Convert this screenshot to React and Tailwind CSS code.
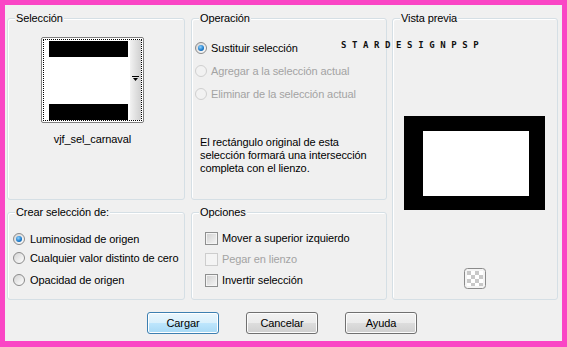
import React from "react";

const F = "font-['Liberation_Sans',Arial,sans-serif] text-[11px] tracking-[-0.1px] leading-[14px] text-black whitespace-nowrap";

function Group({ title, className = "", children }) {
  return (
    <div className={"relative border border-[#d5dfe5] rounded-[3px] shadow-[inset_1px_1px_0_#fff] " + className}>
      <span className="absolute left-[7px] top-[-8px] px-[1px] bg-[#f0f0f0] whitespace-nowrap">{title}</span>
      {children}
    </div>
  );
}

function Radio({ checked, disabled }) {
  return (
    <span
      className={
        "inline-flex items-center justify-center w-[12px] h-[12px] rounded-full border shrink-0 " +
        (disabled
          ? "border-[#cfcfcf] bg-[#f2f2f2]"
          : "border-[#8a8a8a] bg-[linear-gradient(135deg,#d4d4d4,#ffffff)]")
      }
    >
      {checked && (
        <span className="block w-[6px] h-[6px] rounded-full bg-[radial-gradient(circle_at_40%_35%,#8fd3ff,#1a78c8_60%,#0c4f8f)]" />
      )}
    </span>
  );
}

function Check({ disabled }) {
  return (
    <span
      className={
        "inline-block w-[13px] h-[13px] border shrink-0 " +
        (disabled
          ? "border-[#cdcdcd] bg-[#f4f4f4]"
          : "border-[#8e8f8f] bg-[linear-gradient(135deg,#cfcfcf,#f6f6f6)] shadow-[inset_0_0_0_1px_#f4f4f4]")
      }
    />
  );
}

function Btn({ children, def }) {
  return (
    <button
      className={
        "w-[72px] h-[22px] rounded-[3px] border flex items-center justify-center " +
        (def
          ? "border-[#3c7fb1] bg-[linear-gradient(#eaf6fd_0%,#d9f0fc_50%,#bee6fd_50%,#a7d9f5_100%)] shadow-[inset_0_0_0_1px_#fff]"
          : "border-[#707070] bg-[linear-gradient(#f2f2f2_0%,#ebebeb_50%,#dddddd_50%,#cfcfcf_100%)] shadow-[inset_0_0_0_1px_#fcfcfc]")
      }
    >
      {children}
    </button>
  );
}

export default function App() {
  return (
    <div className={"w-[567px] h-[347px] bg-[#fa46c5] pt-[5px] pl-[5px] pr-[5px] pb-[6px] " + F}>
      <div className="relative w-full h-full bg-[#f0f0f0] flex flex-col pt-[13px] pl-[2px]">
        <div className="flex">
          {/* left column */}
          <div className="flex flex-col w-[178px]">
            <Group title="Selección" className="h-[182px] pt-[18px] pl-[33px]">
              <div className="w-[103px] h-[86px] border border-[#7f7f7f] rounded-[2px] bg-white p-[1px]">
                <div className="w-full h-full border border-dotted border-black flex">
                  <div className="flex-1 flex flex-col justify-between pt-[1px] pl-[5px] pr-[2px]">
                    <div className="h-[16px] bg-black" />
                    <div className="h-[16px] bg-black" />
                  </div>
                  <div className="w-[11px] bg-[linear-gradient(to_right,#f2f2f2,#d0d0d0)] pt-[36px] flex justify-center">
                    <svg width="7" height="6" viewBox="0 0 7 6">
                      <rect x="0" y="0" width="7" height="1" fill="#000" />
                      <path d="M1 2 L6 2 L3.5 5 Z" fill="#000" />
                    </svg>
                  </div>
                </div>
              </div>
              <div className="w-[103px] text-center mt-[9px]">vjf_sel_carnaval</div>
            </Group>
            <Group title="Crear selección de:" className="mt-[12px] h-[88px] pl-[5px] pt-[19px]">
              <div className="flex items-center gap-[5px] h-[14px]">
                <Radio checked />
                <span>Luminosidad de origen</span>
              </div>
              <div className="flex items-center gap-[5px] h-[14px] mt-[5px]">
                <Radio />
                <span>Cualquier valor distinto de cero</span>
              </div>
              <div className="flex items-center gap-[5px] h-[14px] mt-[8px]">
                <Radio />
                <span>Opacidad de origen</span>
              </div>
            </Group>
          </div>

          {/* middle column */}
          <div className="flex flex-col w-[196px] ml-[6px]">
            <Group title="Operación" className="h-[182px] pl-[3px] pt-[22px]">
              <div className="flex items-center gap-[4px] h-[14px]">
                <Radio checked />
                <span>Sustituir selección</span>
              </div>
              <div className="flex items-center gap-[4px] h-[14px] mt-[9px] text-[#a3a3a3]">
                <Radio disabled />
                <span>Agregar a la selección actual</span>
              </div>
              <div className="flex items-center gap-[4px] h-[14px] mt-[9px] text-[#a3a3a3]">
                <Radio disabled />
                <span>Eliminar de la selección actual</span>
              </div>
              <p className="ml-[5px] mt-[35px] leading-[13px]">
                El rectángulo original de esta
                <br />
                selección formará una intersección
                <br />
                completa con el lienzo.
              </p>
            </Group>
            <Group title="Opciones" className="mt-[12px] h-[88px] pl-[13px] pt-[18px]">
              <div className="flex items-center gap-[4px] h-[14px]">
                <Check />
                <span>Mover a superior izquierdo</span>
              </div>
              <div className="flex items-center gap-[4px] h-[14px] mt-[7px] text-[#a3a3a3]">
                <Check disabled />
                <span>Pegar en lienzo</span>
              </div>
              <div className="flex items-center gap-[4px] h-[14px] mt-[7px]">
                <Check />
                <span>Invertir selección</span>
              </div>
            </Group>
          </div>

          {/* right column */}
          <Group title="Vista previa" className="ml-[5px] w-[166px] h-[282px] pt-[97px] flex flex-col">
            <div className="ml-[11px] w-[141px] h-[94px] bg-black pt-[15px] pl-[19px]">
              <div className="w-[106px] h-[65px] bg-white" />
            </div>
            <div className="flex justify-center mt-[58px]">
              <svg width="22" height="21" viewBox="0 0 22 21">
                <defs>
                  <pattern id="chk" width="8" height="8" patternUnits="userSpaceOnUse" x="3" y="3">
                    <rect width="8" height="8" fill="#ffffff" />
                    <rect width="4" height="4" fill="#c8c8c8" />
                    <rect x="4" y="4" width="4" height="4" fill="#c8c8c8" />
                  </pattern>
                </defs>
                <rect x="0.5" y="0.5" width="21" height="20" rx="3" fill="#f4f4f4" stroke="#8a8a8a" />
                <rect x="3" y="3" width="16" height="15" fill="url(#chk)" />
              </svg>
            </div>
          </Group>
        </div>

        {/* buttons */}
        <div className="flex mt-[12px] pl-[140px] gap-[27px]">
          <Btn def>Cargar</Btn>
          <Btn>Cancelar</Btn>
          <Btn>Ayuda</Btn>
        </div>

        {/* watermark overlay */}
        <div className="absolute left-[336px] top-[36px] font-['DejaVu_Sans_Mono',monospace] font-bold text-[9px] leading-[9px] tracking-[5.6px] text-[#111]">
          STARDESIGNPSP
        </div>
      </div>
    </div>
  );
}
